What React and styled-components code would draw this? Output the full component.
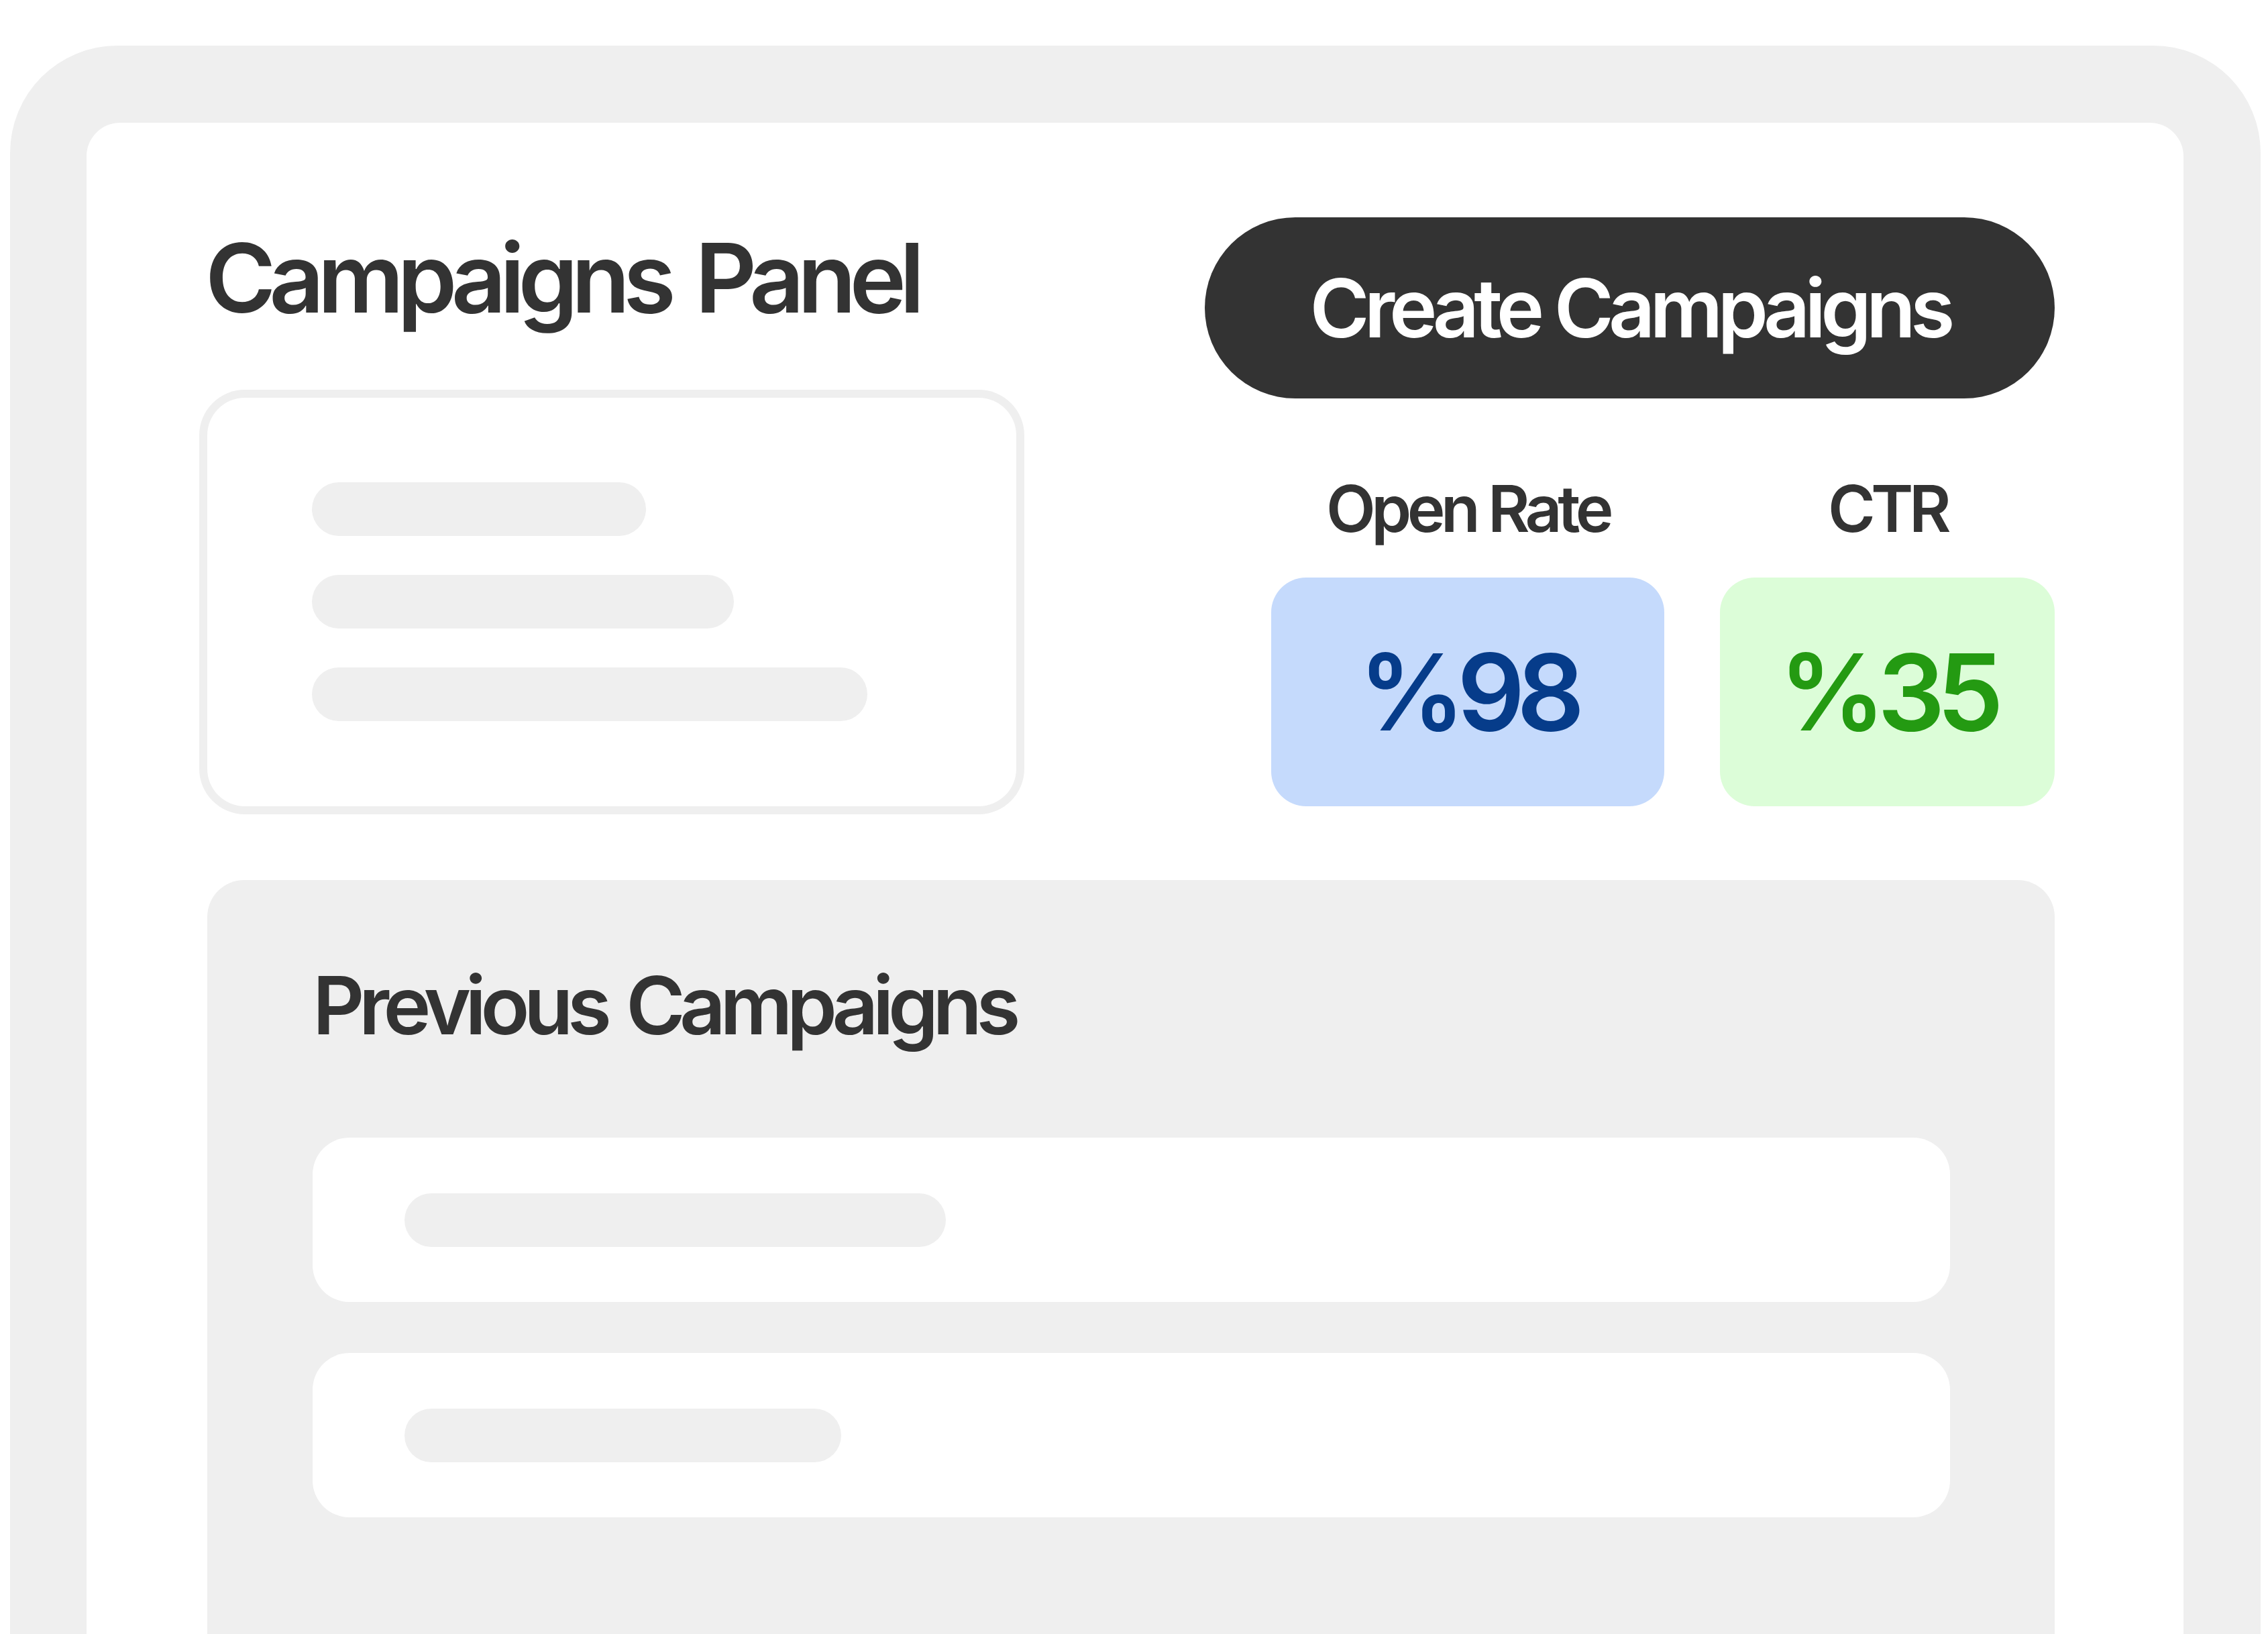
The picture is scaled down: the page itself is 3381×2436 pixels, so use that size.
import React from 'react';
import styled, { createGlobalStyle } from 'styled-components';

const Global = createGlobalStyle`
  html, body { margin: 0; padding: 0; background: #fff; overflow: hidden; }
  body { font-family: Inter, "Noto Sans", sans-serif; color: #333; }
  * { box-sizing: border-box; }
`;

const Frame = styled.div`
  margin: 68px 0 0 15px;
  width: 3355px;
  background: #efefef;
  border-radius: 160px 160px 0 0;
  padding: 115px 115px 0 114px;
`;

const Screen = styled.div`
  background: #fff;
  border-radius: 50px 50px 0 0;
  padding: 141px 192px 0 180px;
`;

const TopRow = styled.div`
  display: flex;
  justify-content: space-between;
  align-items: flex-start;
`;

const LeftCol = styled.div`
  display: flex;
  flex-direction: column;
  padding-top: 18px;
`;

const Title = styled.h1`
  margin: 0 0 108px -3px;
  font-size: 143px;
  line-height: 1;
  font-weight: 600;
  letter-spacing: -10px;
  word-spacing: 12px;
  color: #333;
  white-space: nowrap;
`;

const SkeletonCard = styled.div`
  width: 1206px;
  height: 609px;
  border-radius: 56px;
  box-shadow: 0 0 0 12px #efefef;
  padding: 126px 156px;
  display: flex;
  flex-direction: column;
  gap: 58px;
`;

const Bar = styled.div`
  width: ${p => p.$w}px;
  height: 80px;
  border-radius: 40px;
  background: #efefef;
  flex: none;
`;

const RightCol = styled.div`
  display: flex;
  flex-direction: column;
  align-items: flex-end;
`;

const CreateButton = styled.button`
  width: 1267px;
  height: 270px;
  border: none;
  border-radius: 135px;
  background: #333;
  color: #fff;
  font-family: Inter, "Noto Sans", sans-serif;
  font-size: 121px;
  font-weight: 600;
  letter-spacing: -8px;
  display: flex;
  align-items: center;
  justify-content: center;
  padding: 0;
  white-space: nowrap;
`;

const Stats = styled.div`
  display: flex;
  gap: 83px;
  margin-top: 116px;
`;

const Stat = styled.div`
  display: flex;
  flex-direction: column;
  align-items: center;
`;

const StatLabel = styled.div`
  font-size: 96px;
  line-height: 1;
  font-weight: 600;
  letter-spacing: -6.5px;
  color: #333;
  margin-bottom: 55px;
  white-space: nowrap;
`;

const StatBox = styled.div`
  width: ${p => p.$w}px;
  height: 341px;
  border-radius: 52px;
  background: ${p => p.$bg};
  color: ${p => p.$fg};
  display: flex;
  align-items: center;
  justify-content: center;
  font-size: 158px;
  font-weight: 600;
  letter-spacing: -12px;
  line-height: 1;
`;

const HistoryPanel = styled.section`
  margin-top: 110px;
  background: #efefef;
  border-radius: 55px 55px 0 0;
  padding: 127px 156px 320px 157px;
`;

const PanelTitle = styled.h2`
  margin: 0 0 137px;
  font-size: 120px;
  line-height: 1;
  font-weight: 600;
  letter-spacing: -8.5px;
  word-spacing: 8px;
  color: #333;
  white-space: nowrap;
`;

const List = styled.div`
  display: flex;
  flex-direction: column;
  gap: 76px;
`;

const Row = styled.div`
  height: 245px;
  background: #fff;
  border-radius: 55px;
  display: flex;
  align-items: center;
  padding-left: 137px;
`;

export default function App() {
  return (
    <>
      <Global />
      <Frame>
        <Screen>
          <TopRow>
            <LeftCol>
              <Title>Campaigns Panel</Title>
              <SkeletonCard>
                <Bar $w={498} />
                <Bar $w={629} />
                <Bar $w={828} />
              </SkeletonCard>
            </LeftCol>
            <RightCol>
              <CreateButton>Create Campaigns</CreateButton>
              <Stats>
                <Stat>
                  <StatLabel>Open Rate</StatLabel>
                  <StatBox $w={586} $bg="#c5dafc" $fg="#063c8a">%98</StatBox>
                </Stat>
                <Stat>
                  <StatLabel>CTR</StatLabel>
                  <StatBox $w={499} $bg="#dcfdd8" $fg="#249a12">%35</StatBox>
                </Stat>
              </Stats>
            </RightCol>
          </TopRow>
          <HistoryPanel>
            <PanelTitle>Previous Campaigns</PanelTitle>
            <List>
              <Row><Bar $w={807} /></Row>
              <Row><Bar $w={651} /></Row>
            </List>
          </HistoryPanel>
        </Screen>
      </Frame>
    </>
  );
}
